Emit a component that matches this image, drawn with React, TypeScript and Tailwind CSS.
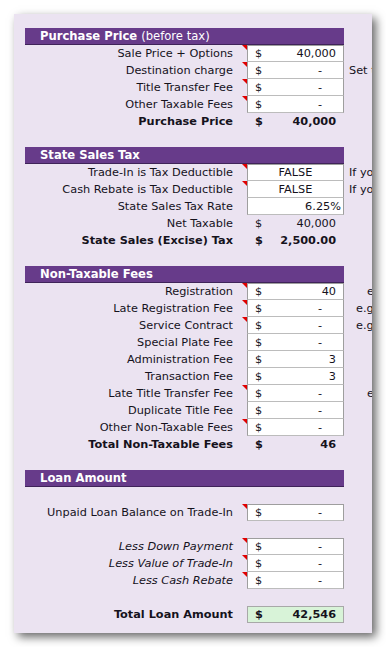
import type { ReactNode } from "react";

type FieldRow = {
	label: string;
	value: string;
	comment?: boolean;
	note?: string;
	noteClass?: string;
	italic?: boolean;
	first?: boolean;
	kind?: "money" | "center" | "percent";
};

const FONT = "font-['DejaVu_Sans',Tahoma,sans-serif]";

function SectionHeader({ children }: { children: ReactNode }) {
	return (
		<div className="flex h-[17px] w-[319px] items-center border-b border-[#3f2359] bg-[#673b8a] pl-[15px] text-[11.6px] leading-[16px] text-white">
			{children}
		</div>
	);
}

function Blank() {
	return <div className="h-[17px]" />;
}

function Amount({ value }: { value: string }) {
	// Accounting format: zero shows as a dash set in from the right edge
	return (
		<>
			<span className="pl-[7px]">$</span>
			<span className={"flex-1 text-right " + (value === "-" ? "pr-[21px]" : "pr-[7px]")}>
				{value}
			</span>
		</>
	);
}

function InputRow({ row }: { row: FieldRow }) {
	return (
		<div className="flex h-[17px] items-stretch text-[11.3px] leading-[17px] text-[#15121c]">
			<div className="relative w-[222px] shrink-0 pr-[14px] text-right">
				<span className={row.italic ? "italic" : ""}>{row.label}</span>
				{row.comment ? (
					<span className="absolute right-0 top-0 h-0 w-0 border-l-[5px] border-t-[5px] border-l-transparent border-t-[#e00000]" />
				) : null}
			</div>
			<div
				className={
					"flex w-[97px] shrink-0 items-center border-x border-b border-x-[#9e9e9e] border-b-[#bcbcbc] bg-white " +
					(row.first ? "border-t border-t-[#9e9e9e]" : "")
				}
			>
				{row.kind === "center" ? (
					<span className="w-full text-center">{row.value}</span>
				) : row.kind === "percent" ? (
					<span className="w-full pr-[2px] text-right">{row.value}</span>
				) : (
					<Amount value={row.value} />
				)}
			</div>
			<div className={"min-w-0 overflow-hidden whitespace-nowrap " + (row.noteClass ?? "pl-[5px]")}>
				{row.note}
			</div>
		</div>
	);
}

function TotalRow({
	label,
	value,
	bold = true,
	green = false,
}: {
	label: string;
	value: string;
	bold?: boolean;
	green?: boolean;
}) {
	return (
		<div
			className={
				"flex h-[17px] items-stretch text-[11.3px] leading-[15px] text-[#15121c] " +
				(bold ? "font-bold" : "")
			}
		>
			<div className="w-[222px] shrink-0 pr-[14px] pt-[1px] text-right">{label}</div>
			<div
				className={
					"flex w-[97px] shrink-0 items-center " +
					(green ? "border border-[#a8a8a8] bg-[#d8f3d8]" : "border border-transparent")
				}
			>
				<Amount value={value} />
			</div>
		</div>
	);
}

const purchaseRows: FieldRow[] = [
	{ label: "Sale Price + Options", value: "40,000", comment: true, first: true },
	{ label: "Destination charge", value: "-", comment: true, note: "Set t" },
	{ label: "Title Transfer Fee", value: "-", comment: true },
	{ label: "Other Taxable Fees", value: "-", comment: true },
];

const taxRows: FieldRow[] = [
	{ label: "Trade-In is Tax Deductible", value: "FALSE", comment: true, first: true, kind: "center", note: "If yo" },
	{ label: "Cash Rebate is Tax Deductible", value: "FALSE", comment: true, kind: "center", note: "If yo" },
	{ label: "State Sales Tax Rate", value: "6.25%", kind: "percent" },
];

const feeRows: FieldRow[] = [
	{ label: "Registration", value: "40", comment: true, first: true, note: "e", noteClass: "pl-[23px]" },
	{ label: "Late Registration Fee", value: "-", comment: true, note: "e.g", noteClass: "pl-[12px]" },
	{ label: "Service Contract", value: "-", comment: true, note: "e.g", noteClass: "pl-[12px]" },
	{ label: "Special Plate Fee", value: "-" },
	{ label: "Administration Fee", value: "3" },
	{ label: "Transaction Fee", value: "3" },
	{ label: "Late Title Transfer Fee", value: "-", comment: true, note: "e", noteClass: "pl-[23px]" },
	{ label: "Duplicate Title Fee", value: "-" },
	{ label: "Other Non-Taxable Fees", value: "-", comment: true },
];

const lessRows: FieldRow[] = [
	{ label: "Less Down Payment", value: "-", comment: true, italic: true, first: true },
	{ label: "Less Value of Trade-In", value: "-", comment: true, italic: true },
	{ label: "Less Cash Rebate", value: "-", comment: true, italic: true },
];

export default function App() {
	return (
		<div className={"min-h-[647px] w-[386px] bg-white pl-[14px] pt-[14px] " + FONT}>
			<div className="w-[358px] overflow-hidden bg-[#ebe3f1] pb-[10px] pl-[11px] pt-[14px] shadow-[4px_4px_9px_rgba(0,0,0,0.6)]">
				<SectionHeader>
					<span className="font-bold">Purchase Price</span>
					<span className="ml-[4px]">(before tax)</span>
				</SectionHeader>
				{purchaseRows.map((row) => (
					<InputRow key={row.label} row={row} />
				))}
				<TotalRow label="Purchase Price" value="40,000" />
				<Blank />

				<SectionHeader>
					<span className="font-bold">State Sales Tax</span>
				</SectionHeader>
				{taxRows.map((row) => (
					<InputRow key={row.label} row={row} />
				))}
				<TotalRow label="Net Taxable" value="40,000" bold={false} />
				<TotalRow label="State Sales (Excise) Tax" value="2,500.00" />
				<Blank />

				<SectionHeader>
					<span className="font-bold">Non-Taxable Fees</span>
				</SectionHeader>
				{feeRows.map((row) => (
					<InputRow key={row.label} row={row} />
				))}
				<TotalRow label="Total Non-Taxable Fees" value="46" />
				<Blank />

				<SectionHeader>
					<span className="font-bold">Loan Amount</span>
				</SectionHeader>
				<Blank />
				<InputRow
					row={{ label: "Unpaid Loan Balance on Trade-In", value: "-", comment: true, first: true }}
				/>
				<Blank />
				{lessRows.map((row) => (
					<InputRow key={row.label} row={row} />
				))}
				<Blank />
				<TotalRow label="Total Loan Amount" value="42,546" green />
			</div>
		</div>
	);
}
